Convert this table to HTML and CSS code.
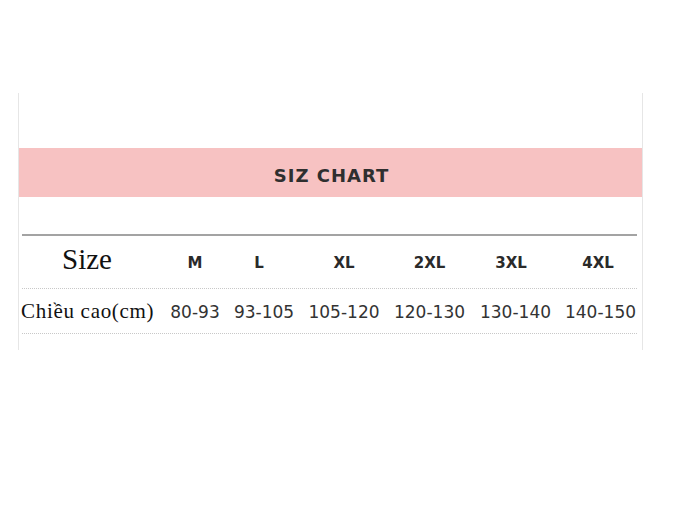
FILE: index.html
```html
<!DOCTYPE html>
<html lang="vi">
<head>
<meta charset="utf-8">
<link rel="stylesheet" href="styles.css">
</head>
<body>
<div class="card">
  <div class="band">SIZ CHART</div>
  <div class="table">
    <div class="row head">
      <div class="cell label size">Size</div>
      <div class="cell">M</div>
      <div class="cell nudge5">L</div>
      <div class="cell">XL</div>
      <div class="cell">2XL</div>
      <div class="cell nudge4">3XL</div>
      <div class="cell nudge2">4XL</div>
    </div>
    <div class="row body">
      <div class="cell label">Chiều cao(cm)</div>
      <div class="cell">80-93</div>
      <div class="cell">93-105</div>
      <div class="cell">105-120</div>
      <div class="cell">120-130</div>
      <div class="cell">130-140</div>
      <div class="cell">140-150</div>
    </div>
  </div>
</div>
</body>
</html>
```

FILE: styles.css
```css
html, body {
  margin: 0;
  padding: 0;
  background: #fff;
}
body {
  padding-top: 93px;
  font-family: "DejaVu Sans", Verdana, sans-serif;
  color: #333;
}
.card {
  margin-left: 18px;
  width: 625px;
  height: 257px;
  border-left: 1px solid #e6e6e6;
  border-right: 1px solid #e6e6e6;
  padding-top: 55px;
  box-sizing: border-box;
}
.band {
  height: 49px;
  background: #f7c2c2;
  display: flex;
  align-items: center;
  justify-content: center;
  font-size: 18px;
  letter-spacing: 1px;
  color: #2f2f2f;
  font-weight: bold;
  padding-left: 2px;
  padding-top: 5px;
  box-sizing: border-box;
}
.table {
  margin-top: 37px;
  margin-left: 3px;
  width: 615px;
  border-top: 2px solid #a3a3a3;
}
.row {
  display: grid;
  grid-template-columns: 136px 74px 64px 96px 75px 97px 73px;
  border-bottom: 1px dotted #c8c8c8;
}
.row.head {
  height: 52px;
}
.row.body {
  height: 44px;
}
.cell {
  display: flex;
  align-items: center;
  justify-content: center;
}
.head .cell {
  font-size: 15px;
  font-weight: bold;
  color: #2a2a2a;
  padding-top: 2px;
}
.body .cell {
  font-size: 17px;
  color: #333;
  padding-top: 1px;
}
.head .cell.size {
  font-family: "Liberation Serif", "Times New Roman", serif;
  font-weight: normal;
  font-size: 29px;
  color: #111;
  padding-top: 0;
  padding-bottom: 5px;
  padding-right: 6px;
}
.body .cell.label {
  font-family: "Liberation Serif", "Times New Roman", serif;
  font-size: 21px;
  letter-spacing: 0.7px;
  color: #111;
  justify-content: flex-start;
  margin-left: -1px;
  padding-top: 0;
}
.nudge5 { padding-right: 10px; }
.nudge4 { padding-right: 9px; }
.nudge2 { padding-right: 5px; }
```
